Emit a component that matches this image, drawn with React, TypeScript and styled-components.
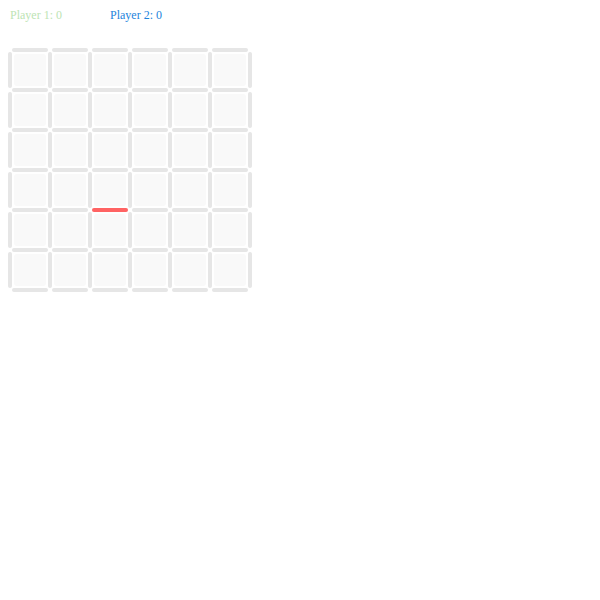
import React from "react";
import styled, { createGlobalStyle } from "styled-components";

const Global = createGlobalStyle`
  body {
    margin: 8px;
    background: #ffffff;
    font-family: "Liberation Serif", "Times New Roman", serif;
  }
`;

const Scores = styled.div`
  display: flex;
  height: 40px;
  padding-left: 2px;
  font-size: 12px;
  line-height: normal;
`;

const Score = styled.span<{ $color: string }>`
  width: 100px;
  color: ${(p) => p.$color};
`;

const Board = styled.div`
  display: grid;
  grid-template-columns: repeat(6, 4px 36px) 4px;
  grid-template-rows: repeat(6, 4px 36px) 4px;
  width: max-content;
`;

const Dot = styled.div``;

const HLine = styled.div<{ $active?: boolean }>`
  height: 4px;
  border-radius: 2px;
  background: ${(p) => (p.$active ? "#ff6363" : "#e6e6e6")};
`;

const VLine = styled.div`
  width: 4px;
  border-radius: 2px;
  background: #e6e6e6;
`;

const Box = styled.div`
  margin: 2px;
  border-radius: 3px;
  background: #f9f9f9;
`;

const N = 13;

export default function App() {
  const cells: React.ReactNode[] = [];
  for (let r = 0; r < N; r++) {
    for (let c = 0; c < N; c++) {
      const key = `${r}-${c}`;
      const rEven = r % 2 === 0;
      const cEven = c % 2 === 0;
      if (rEven && cEven) cells.push(<Dot key={key} />);
      else if (rEven) cells.push(<HLine key={key} $active={r === 8 && c === 5} />);
      else if (cEven) cells.push(<VLine key={key} />);
      else cells.push(<Box key={key} />);
    }
  }
  return (
    <>
      <Global />
      <Scores>
        <Score $color="#bde4b4">Player 1: 0</Score>
        <Score $color="#1e84dc">Player 2: 0</Score>
      </Scores>
      <Board>{cells}</Board>
    </>
  );
}
